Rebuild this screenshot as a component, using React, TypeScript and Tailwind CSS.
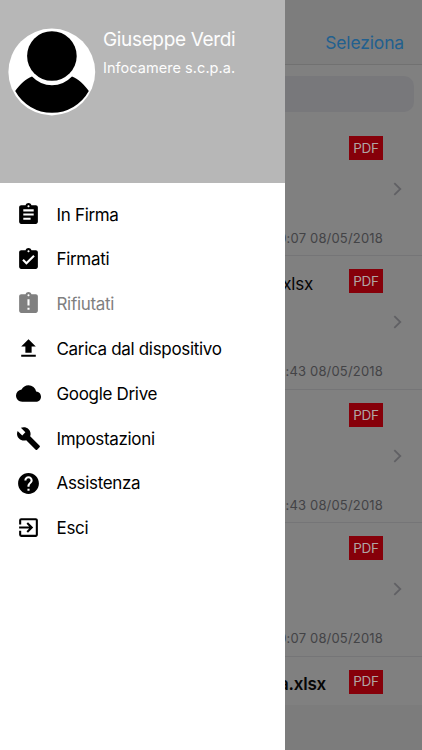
import React from "react";
import {
  MdAssignment,
  MdAssignmentTurnedIn,
  MdAssignmentLate,
  MdCloud,
  MdBuild,
  MdHelp,
  MdExitToApp,
} from "react-icons/md";

function UploadIcon() {
  return (
    <svg viewBox="0 0 24 24" className="size-[25px]" fill="currentColor">
      <path d="M9 16h6v-6h4l-7-7-7 7h4zm-4 2h14v2H5z" />
    </svg>
  );
}

const menu = [
  { label: "In Firma", icon: <MdAssignment />, color: "text-black" },
  { label: "Firmati", icon: <MdAssignmentTurnedIn />, color: "text-black" },
  { label: "Rifiutati", icon: <MdAssignmentLate />, color: "text-[#808080]" },
  { label: "Carica dal dispositivo", icon: <UploadIcon />, color: "text-black" },
  { label: "Google Drive", icon: <MdCloud />, color: "text-black" },
  { label: "Impostazioni", icon: <MdBuild />, color: "text-black" },
  { label: "Assistenza", icon: <MdHelp />, color: "text-black" },
  { label: "Esci", icon: <MdExitToApp />, color: "text-black" },
];

const documents = [
  { name: "", style: "", date: "0:07 08/05/2018" },
  { name: "xlsx", style: "pr-[36px] font-normal tracking-[-0.2px]", date: ":43 08/05/2018" },
  { name: "", style: "", date: ":43 08/05/2018" },
  { name: "", style: "", date: "0:07 08/05/2018" },
  { name: "a.xlsx", style: "pr-[23px] font-semibold tracking-[-0.2px]", date: "" },
];

function Avatar() {
  return (
    <svg viewBox="0 0 88 88" className="size-[88px] shrink-0">
      <circle cx="43.8" cy="44" r="43.4" fill="#fff" />
      <path d="M7.2 63.1C12 56 18 51 24 48.5A27.5 27.5 0 0 0 64 48.5C70 51 76 56 80.8 63.1A42 42 0 0 1 7.2 63.1Z" fill="#000" />
      <circle cx="43.9" cy="28" r="24.8" fill="#000" />
    </svg>
  );
}

function DocumentRow({ doc }: { doc: (typeof documents)[number] }) {
  return (
    <div className="flex h-[133.4px] shrink-0 flex-col border-b border-[#757577] pt-[13px]">
      <div className="flex h-[24px] shrink-0 items-start pr-[39px]">
        <div
          className={`flex h-[30px] min-w-0 flex-1 items-center justify-end whitespace-nowrap text-[17px] text-[#060606] ${doc.style}`}
        >
          {doc.name}
        </div>
        <div className="flex h-[24px] w-[34px] shrink-0 items-center justify-center bg-[#86000a] text-[13.5px] tracking-[-0.3px] text-[#b0a4a4]">
          PDF
        </div>
      </div>
      <div className="mt-[22px] flex justify-end pr-[20px]">
        <svg viewBox="0 0 9 14" className="h-[14px] w-[9px]" fill="none" stroke="#606064" strokeWidth="1.8">
          <path d="M1.3 1.1 7.3 7 1.3 12.9" />
        </svg>
      </div>
      <div className="mt-[33px] flex h-[19px] items-center justify-end whitespace-nowrap pr-[39px] text-[13px] tracking-[0.18px] text-[#434346]">
        {doc.date}
      </div>
    </div>
  );
}

export default function App() {
  return (
    <div className="flex h-[750px] w-[422px] overflow-hidden bg-white font-['Inter','Liberation_Sans',sans-serif]">
      <aside className="flex w-[285px] shrink-0 flex-col bg-white">
        <header className="flex h-[183px] shrink-0 items-start bg-[#b7b7b7] pl-2 pt-[28px] text-[#fdfdfd]">
          <Avatar />
          <div className="ml-[7px] whitespace-nowrap">
            <h1 className="text-[19px] leading-6 tracking-[-0.35px]">Giuseppe Verdi</h1>
            <p className="mt-[5px] text-[14.5px] leading-[22px] tracking-[0.05px]">Infocamere s.c.p.a.</p>
          </div>
        </header>
        <nav className="pt-[9px]">
          {menu.map((item) => (
            <div
              key={item.label}
              className={`flex h-[44.8px] items-center pl-4 text-[17px] tracking-[-0.32px] ${item.color}`}
            >
              <span className="flex w-[40.5px] shrink-0 text-[25px]">{item.icon}</span>
              <span className="whitespace-nowrap pt-[2px]">{item.label}</span>
            </div>
          ))}
        </nav>
      </aside>
      <main className="flex min-w-0 flex-1 flex-col bg-[#808080]">
        <div className="flex h-[65px] shrink-0 items-end justify-end border-b border-[#717171] bg-[#7d7d7d] pb-[9px] pr-[18px] text-[17.5px] leading-6 tracking-[-0.15px] text-[#22608f]">
          Seleziona
        </div>
        <div className="h-[58px] shrink-0 pr-[8px] pt-[11px]">
          <div className="h-[36px] rounded-r-[10px] bg-[#78787b]" />
        </div>
        <div className="flex min-h-0 flex-1 flex-col overflow-hidden">
          {documents.map((doc, index) => (
            <DocumentRow key={index} doc={doc} />
          ))}
        </div>
        <div className="h-[45px] shrink-0 bg-[#7c7c7c]" />
      </main>
    </div>
  );
}
